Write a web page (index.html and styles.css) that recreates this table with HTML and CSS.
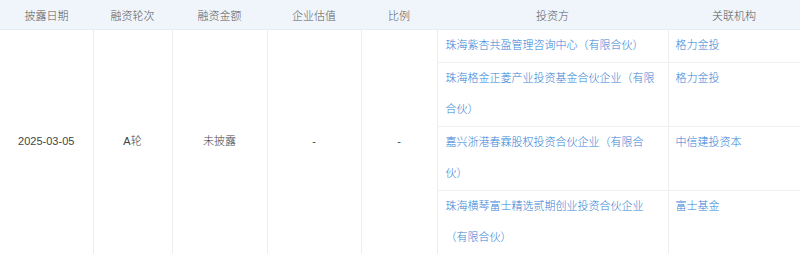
FILE: index.html
```html
<!DOCTYPE html>
<html lang="zh">
<head>
<meta charset="utf-8">
<link rel="stylesheet" href="styles.css">
</head>
<body>
<table class="fin">
  <colgroup>
    <col class="c1"><col class="c2"><col class="c3"><col class="c4"><col class="c5"><col class="c6"><col class="c7">
  </colgroup>
  <thead>
    <tr>
      <th>披露日期</th><th>融资轮次</th><th>融资金额</th><th>企业估值</th><th>比例</th><th>投资方</th><th>关联机构</th>
    </tr>
  </thead>
  <tbody>
    <tr>
      <td class="mid" rowspan="4">2025-03-05</td>
      <td class="mid" rowspan="4">A轮</td>
      <td class="mid" rowspan="4">未披露</td>
      <td class="mid" rowspan="4">-</td>
      <td class="mid" rowspan="4">-</td>
      <td class="inv"><a class="lnk">珠海紫杏共盈管理咨询中心（有限合伙）</a></td>
      <td class="org"><a class="lnk">格力金投</a></td>
    </tr>
    <tr>
      <td class="inv"><a class="lnk">珠海格金正菱产业投资基金合伙企业（有限合伙）</a></td>
      <td class="org"><a class="lnk">格力金投</a></td>
    </tr>
    <tr>
      <td class="inv"><a class="lnk">嘉兴浙港春霖股权投资合伙企业（有限合伙）</a></td>
      <td class="org"><a class="lnk">中信建投资本</a></td>
    </tr>
    <tr>
      <td class="inv"><a class="lnk">珠海横琴富士精选贰期创业投资合伙企业（有限合伙）</a></td>
      <td class="org"><a class="lnk">富士基金</a></td>
    </tr>
  </tbody>
</table>
</body>
</html>
```

FILE: styles.css
```css
html, body {
  margin: 0;
  padding: 0;
  background: #fff;
}

.fin {
  width: 800px;
  table-layout: fixed;
  border-collapse: collapse;
  font-family: "Liberation Sans", "Noto Sans CJK SC", sans-serif;
  font-size: 11px;
  font-weight: 300;
  color: #444;
}

.c1 { width: 93px; }
.c2 { width: 79px; }
.c3 { width: 95px; }
.c4 { width: 94px; }
.c5 { width: 76px; }
.c6 { width: 231px; }
.c7 { width: 132px; }

.fin th {
  height: 29px;
  padding: 0;
  background: #f0f5fb;
  color: #5a5a5a;
  font-weight: 300;
  text-align: center;
  border-bottom: 1px solid #e8edf3;
}

.fin td {
  padding: 0 8px 0 8px;
  line-height: 31.5px;
  vertical-align: top;
  border-left: 1px solid #eeeeee;
  border-bottom: 1px solid #f0f0f0;
}

.fin td.mid {
  text-align: center;
  vertical-align: middle;
  padding: 0;
}

.fin tbody tr:first-child td.mid:first-child {
  border-left: none;
}

.fin td.inv {
  padding: 0 8px 0 8px;
  text-align: left;
}

.fin td.org {
  padding: 0 7px;
  text-align: left;
}

.lnk {
  color: #3381d6;
  text-decoration: none;
}
```
